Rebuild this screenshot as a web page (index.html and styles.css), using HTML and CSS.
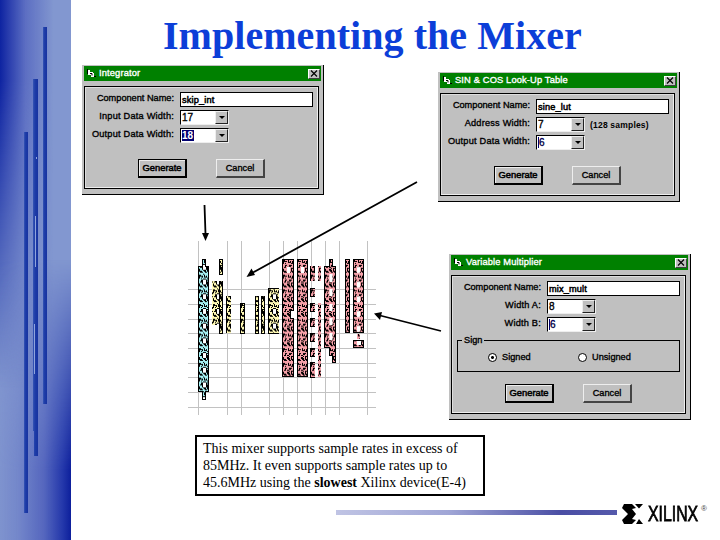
FILE: index.html
```
<!DOCTYPE html>
<html lang="en">
<head>
<meta charset="utf-8">
<title>Implementing the Mixer</title>
<link rel="stylesheet" href="styles.css">
</head>
<body>
<main class="slide">
  <aside class="band">
    <svg width="71" height="540" viewBox="0 0 71 540">
      <defs>
        <linearGradient id="bar"><stop offset="0" stop-color="#3655b4"/><stop offset=".4" stop-color="#1d3ca8"/><stop offset="1" stop-color="#1732a0"/></linearGradient>
      </defs>
      <g fill="url(#bar)">
        <rect x="24" y="132" width="4" height="381"/>
        <path d="M33 79h5v377h-4v-25h-1z"/>
        <rect x="43" y="27" width="4" height="377"/>
      </g>
      <path d="M35.5 216v51M34.5 324v50M36.5 157v2" stroke="#8fa3dc"/>
    </svg>
  </aside>
  <h1 class="title">Implementing the Mixer</h1>

  <section class="dialog integrator">
    <header class="caption"><svg class="form-icon" width="9" height="9"><path d="M1 1h2v2h3v1h1v4H4V6H1z" fill="#fff"/><path d="M3 4.500h2v2" fill="none" stroke="#000"/><path d="M0 0h1v5H0zM7 7h2v1H7z"/></svg><span class="caption-text t1">Integrator</span><span class="close"><svg width="8" height="7"><path d="M1 .5l6 6M7 .5l-6 6" stroke="#000" stroke-width="1.200"/></svg></span></header>
    <div class="panel">
      <div class="row first"><span class="label">Component Name:</span><span class="field">skip_int</span></div>
      <div class="row"><span class="label">Input Data Width:</span><span class="combo"><span class="value">17</span><i class="drop"></i></span></div>
      <div class="row"><span class="label">Output Data Width:</span><span class="combo"><span class="value"><b class="sel">18</b></span><i class="drop"></i></span></div>
      <div class="buttons"><span class="button default">Generate</span><span class="button">Cancel</span></div>
    </div>
  </section>

  <section class="dialog lookup">
    <header class="caption"><svg class="form-icon" width="9" height="9"><path d="M1 1h2v2h3v1h1v4H4V6H1z" fill="#fff"/><path d="M3 4.500h2v2" fill="none" stroke="#000"/><path d="M0 0h1v5H0zM7 7h2v1H7z"/></svg><span class="caption-text t2">SIN &amp; COS Look-Up Table</span><span class="close"><svg width="8" height="7"><path d="M1 .5l6 6M7 .5l-6 6" stroke="#000" stroke-width="1.200"/></svg></span></header>
    <div class="panel">
      <div class="row first"><span class="label">Component Name:</span><span class="field">sine_lut</span></div>
      <div class="row"><span class="label">Address Width:</span><span class="combo"><span class="value">7</span><i class="drop"></i></span><span class="note">(128 samples)</span></div>
      <div class="row"><span class="label">Output Data Width:</span><span class="combo"><span class="value"><b class="sel part">6</b></span><i class="drop"></i></span></div>
      <div class="buttons"><span class="button default">Generate</span><span class="button">Cancel</span></div>
    </div>
  </section>

  <section class="dialog multiplier">
    <header class="caption"><svg class="form-icon" width="9" height="9"><path d="M1 1h2v2h3v1h1v4H4V6H1z" fill="#fff"/><path d="M3 4.500h2v2" fill="none" stroke="#000"/><path d="M0 0h1v5H0zM7 7h2v1H7z"/></svg><span class="caption-text t3">Variable Multiplier</span><span class="close"><svg width="8" height="7"><path d="M1 .5l6 6M7 .5l-6 6" stroke="#000" stroke-width="1.200"/></svg></span></header>
    <div class="panel">
      <div class="row first"><span class="label">Component Name:</span><span class="field">mix_mult</span></div>
      <div class="row"><span class="label">Width A:</span><span class="combo"><span class="value">8</span><i class="drop"></i></span></div>
      <div class="row"><span class="label">Width B:</span><span class="combo"><span class="value"><b class="sel part">6</b></span><i class="drop"></i></span></div>
      <fieldset class="sign"><legend>Sign</legend><span class="option"><i class="radio on"></i>Signed</span><span class="option"><i class="radio"></i>Unsigned</span></fieldset>
      <div class="buttons"><span class="button default">Generate</span><span class="button">Cancel</span></div>
    </div>
  </section>

  <svg class="floorplan" width="276" height="246" viewBox="184 174 276 246">
    <defs>
      <pattern id="cells" width="14" height="14.7" patternUnits="userSpaceOnUse" x="198" y="259">
        <g shape-rendering="crispEdges">
        <path d="M1 1h2v1h2v1h-3v2h-1zM6 1h1v2h2v1h-3zM10 2h1v3h-2v-1h1zM3 6h2v1h-1v2h-2v-1h1zM7 6h3v1h-1v1h-2zM1 10h1v2h2v1h-3zM5 10h2v1h1v2h-2v-1h-1zM9 9h2v1h-1v3h-1zM0 8h1v1h-1zM12 1h1v2h-1zM12 5h2v1h-1v2h-1zM12 10h1v3h-1zM2 14h3v-1h-3zM7 13h2v1h-2zM8 2h1v1h-1zM3 4h1v1h-1zM9 8h1v1h-1zM0 4h1v2h-1zM7 9h1v1h-1zM4 3h1v1h-1zM10 12h1v2h-1zM5 0h1v1h-1z"/>
        <path d="M5 6h3v5h-3z" fill="#fff"/><path d="M4 6h1v5h-1zM8 6h1v5h-1zM5 5h3v1h-3z"/>
        </g>
      </pattern>
      <pattern id="pinkcells" width="14" height="14.7" patternUnits="userSpaceOnUse" x="198" y="259">
        <path shape-rendering="crispEdges" d="M1 1h2v1h2v1h-3v2h-1zM6 1h1v2h2v1h-3zM10 2h1v3h-2v-1h1zM3 6h2v1h-1v2h-2v-1h1zM7 6h3v1h-1v1h-2zM1 10h1v2h2v1h-3zM5 10h2v1h1v2h-2v-1h-1zM9 9h2v1h-1v3h-1zM0 8h1v1h-1zM12 1h1v2h-1zM12 5h2v1h-1v2h-1zM12 10h1v3h-1zM2 14h3v-1h-3zM7 13h2v1h-2zM8 2h1v1h-1zM3 4h1v1h-1zM5 8h2v1h-2zM0 4h1v2h-1zM7 9h1v1h-1zM10 12h1v2h-1z"/>
      </pattern>
      <pattern id="slots" width="14" height="14.7" patternUnits="userSpaceOnUse" x="353" y="259"><rect x="4" y="8" width="3" height="6" fill="#fff"/></pattern>
    </defs>
    <path class="grid" d="M198.500 241V415M227.500 241V415M241.500 241V415M269.500 241V415M283.500 241V415M297.500 241V415M311.500 241V415M325.500 241V415M339.500 241V415M367.500 241V415M188 289.500H376M188 304.500H376M188 319.500H376M188 333.500H376M188 348.500H376M188 363.500H376M188 377.500H376M188 392.500H376M188 407.500H376"/>
    <g stroke="none">
      <path fill="#a5f0f2" d="M198 266h4v-7h4v7h3v126h-3v8h-4v-8h-4z"/>
      <path fill="#fff9b4" d="M219 259h4v16h-4zM212 281h11v52h-4v-8h-7zM226 296h5v37h-5zM240 303h5v31h-5zM255 296h4v37h-4zM261 296h4v37h-4zM268 288h11v45h-11z"/>
      <path fill="#f5a0a8" d="M282 259h12v51h-3v8h3v59h-12zM297 259h11v118h-11zM324 266h5v-7h4v7h3v97h-4v-8h-3v-7h-5zM345 259h5v74h-5zM353 259h11v74h-11zM353 340h11v8h-11zM310 266h5v15h-5zM310 288h5v8h-5zM310 303h5v8h-5zM310 318h5v8h-5zM310 333h5v8h-5zM310 348h5v8h-5zM310 362h5v15h-5zM318 266h3v15h-3zM318 303h3v74h-3zM357 334h3v5h-3z"/>
    </g>
    <g fill="url(#cells)">
      <path d="M198 266h4v-7h4v7h3v126h-3v8h-4v-8h-4zM219 259h4v16h-4zM212 281h11v52h-4v-8h-7zM226 296h5v37h-5zM240 303h5v30h-5zM255 296h4v37h-4zM261 296h4v37h-4zM268 288h11v45h-11z"/>
    </g>
    <g fill="url(#pinkcells)">
      <path d="M282 259h12v51h-3v8h3v59h-12zM297 259h11v118h-11zM324 266h5v-7h4v7h3v97h-4v-8h-3v-7h-5zM345 259h5v74h-5zM353 259h11v74h-11zM353 340h11v8h-11z"/>
      <path d="M310 266h5v15h-5zM310 288h5v8h-5zM310 303h5v8h-5zM310 318h5v8h-5zM310 333h5v8h-5zM310 348h5v8h-5zM310 362h5v15h-5zM318 266h3v15h-3zM318 303h3v74h-3zM357 334h3v5h-3z"/>
    </g>
    <path d="M353 259h11v73h-11z" fill="url(#slots)"/>
    <path d="M357 341h4v4h-4z" fill="#fff"/>
    <path d="M331 274v8M331 289v7M331 304v7M331 318v7M331 333v7M288.500 267v6M302.500 267v6" stroke="#fff" stroke-width="3"/>
    <g fill="none" stroke="#000" shape-rendering="crispEdges">
      <path d="M198.500 266.500h4v-7h3v7h3v125h-3v8h-3v-8h-4zM219.500 259.500h3v15h-3zM219.500 281v52h3v-52M226.500 296v37M240.500 303.500h4v30h-4zM255.500 296v37h3v-37M261.500 296v37h3v-37M279 288.500h-10.500v44.500h10"/>
      <path d="M282.500 259.500h11v51h-3v8h3v58h-11zM297.500 259.500h10v117h-10zM324.500 266.500h5v-7h3v7h3v96h-3v-7h-3v-8h-5zM345.500 259.500h4v73h-4zM353.500 259.500h10v73h-10zM353.500 340.500h10v7h-10z"/>
      <path d="M310.500 266v15M310.500 288v8h4M310.500 303v8h4M310.500 318v8h4M310.500 333v8h4M310.500 348v8h4M310.500 362v15h4M314.500 266v7M310 288.500h5M310 303.500h5M310 318.500h5M310 333.500h5M310 348.500h5M310 362.500h5"/>
    </g>
    <path d="M204.500 205L205.500 234M417 182L253 272.500M441 331L380 315.500" stroke="#000" stroke-width="1.800"/>
    <path d="M202 233h7l-3.500 8zM246.500 277l5-8.500 3.500 6.500zM374 313.500l8-1.500-2 8z"/>
  </svg>

  <p class="textbox">This mixer supports sample rates in excess of<br>85MHz. It even supports sample rates up to<br>45.6MHz using the <b>slowest</b> Xilinx device(E-4)</p>

  <footer class="footer">
    <div class="rule"></div>
    <svg class="mark" width="22" height="22" viewBox="0 0 22 22"><path d="M2 1h8l4 4-4 1 4 5-4 5 4 1-4 4H2l-2-4 6-6-6-6zM13 1h8l-4 4.500zM14 21l3-5 4 5z"/></svg>
    <span class="brand">XILINX</span><span class="reg">®</span>
  </footer>
</main>
</body>
</html>
```
FILE: styles.css
```
* { box-sizing: border-box; }
body { margin: 0; background: #fff; color: #000; overflow: hidden; }
.slide { position: relative; width: 720px; height: 540px; overflow: hidden; }
.band {
  position: absolute; left: 0; top: 0; width: 71px; height: 540px;
  background: #8297d0;
}
.band::before, .band::after { content: ""; position: absolute; inset: 0; }
.band::before {
  background: linear-gradient(to right, #0d23a1 0%, #2438ab 10%, rgba(80,97,190,.75) 36%, rgba(130,151,208,0) 75%);
  -webkit-mask-image: linear-gradient(to bottom, #000 15%, transparent 72%);
  mask-image: linear-gradient(to bottom, #000 15%, transparent 72%);
}
.band::after {
  background: linear-gradient(to left, #0d1f9c 0%, #2438ab 12%, rgba(70,86,184,.75) 38%, rgba(90,106,192,.35) 75%, rgba(100,116,196,.1) 100%);
  -webkit-mask-image: linear-gradient(to bottom, transparent 48%, #000 87%);
  mask-image: linear-gradient(to bottom, transparent 48%, #000 87%);
}
.band svg { position: relative; z-index: 1; display: block; }
.title {
  position: absolute; left: 163px; top: 13px; margin: 0; white-space: nowrap;
  font: bold 40px/46px "Liberation Serif", serif; color: #0c3ed8; letter-spacing: .05px;
}
.dialog {
  position: absolute; width: 242px; height: 130px; padding: 1px 2px 5px 2px;
  display: flex; flex-direction: column; background: #c0c0c0;
  border-right: 1px solid #000; border-bottom: 1px solid #000;
  font: 9.200px/11px "Liberation Sans", sans-serif; white-space: nowrap;
  -webkit-text-stroke: .35px #000;
}
.integrator { left: 82px; top: 65px; }
.lookup { left: 438px; top: 72px; }
.multiplier { left: 449px; top: 254px; height: 166px; }
.caption {
  height: 15px; flex: none; display: flex; align-items: center; padding: 0 1px 0 3px;
  background: #008000; color: #fff; font-size: 9.300px; letter-spacing: .15px;
  -webkit-text-stroke: .35px #fff;
}
.form-icon { margin-right: 3px; }
.close {
  margin-left: auto; width: 12px; height: 10px; display: grid; place-items: center;
  background: #c0c0c0; border: 1px solid #fff; border-right-color: #404040; border-bottom-color: #404040;
}
.panel {
  flex: 1; margin: 5px 2px 0 0; padding: 5px 5px; border: 1px solid #000;
  box-shadow: inset -1px -1px #eee, inset 1px 1px #ddd;
}
.row { display: flex; height: 15px; margin-bottom: 3px; }
.label { width: 84px; margin-right: 6px; text-align: right; line-height: 13px; letter-spacing: .22px; }
.first .label { letter-spacing: 0; }
.field { width: 133px; height: 15px; border: 1px solid #000; background: #fff; padding-left: 1px; line-height: 14px; font-size: 9.200px; -webkit-text-stroke-width: .5px; letter-spacing: .15px; }
.combo { width: 49px; height: 15px; display: flex; background: #fff; border: 1px solid #000; border-right-color: #eee; border-bottom-color: #eee; }
.value { flex: 1; padding-left: 1px; line-height: 14px; font-size: 10px; }
.sel { display: inline-block; background: #000070; color: #fff; -webkit-text-stroke: 0; height: 11px; line-height: 11px; padding-right: 1px; vertical-align: top; margin-top: 1px; }
.sel.part { background: #fff; color: #000; font-weight: normal; border-left: 1px solid #000070; -webkit-text-stroke: .35px #000070; }
.drop { width: 13px; height: 13px; background: #c0c0c0; border: 1px solid #eee; border-right-color: #222; border-bottom-color: #222; display: grid; place-items: center; }
.drop::before { content: ""; border: 3px solid transparent; border-top: 3px solid #000; border-bottom: 0; }
.note { margin-left: 5px; line-height: 17px; font-weight: bold; font-size: 8.500px; -webkit-text-stroke: 0; letter-spacing: .2px; }
.buttons { display: flex; gap: 29px; margin: 16px 0 0 48px; }
.button { width: 49px; height: 19px; text-align: center; line-height: 16px; border: 1px solid #eee; border-right: 2px solid #444; border-bottom: 2px solid #444; }
.button.default { border-color: #000; box-shadow: inset 1px 1px #eee; font-size: 9.400px; -webkit-text-stroke-width: .5px; }
.sign { margin: 1px 0 0; height: 37px; padding: 0 0 0 30px; border: 1px solid #000; display: flex; gap: 38px; }
.sign legend { margin-left: -26px; padding: 0 2px; height: 11px; }
.option { display: flex; align-items: center; gap: 5px; width: 52px; height: 22px; }
.radio { width: 9px; height: 9px; flex: none; border: 1px solid #000; border-radius: 50%; background: #fff; }
.radio.on { background: radial-gradient(circle, #000 1.200px, #fff 1.700px); }
.multiplier .buttons { margin-top: 12px; }
.floorplan { position: absolute; left: 184px; top: 174px; }
.grid { stroke: #c2c2c2; fill: none; }
.textbox {
  position: absolute; left: 195px; top: 435px; width: 290px; height: 61px; margin: 0;
  border: 2px solid #000; padding: 3px 6px; background: #fff; white-space: nowrap;
  font: 14px/17px "Liberation Serif", serif;
}
.footer { position: absolute; left: 336px; top: 502px; width: 384px; height: 24px; display: flex; }
.rule { width: 281px; height: 5px; margin: 8px 5px 0 0; background: linear-gradient(to right, #c0c4e4, #a0a6d6 40%, #4a4ea4 80%, #5559ab); }
.mark { margin-top: 1px; }
.brand { margin-left: 4px; font: 22px/24px "Liberation Sans", sans-serif; -webkit-text-stroke: .8px #000; transform: scaleX(.72); transform-origin: left; width: 53px; }
.reg { font: 8px/10px "Liberation Sans", sans-serif; margin-top: 2px; color: #444; }
```
